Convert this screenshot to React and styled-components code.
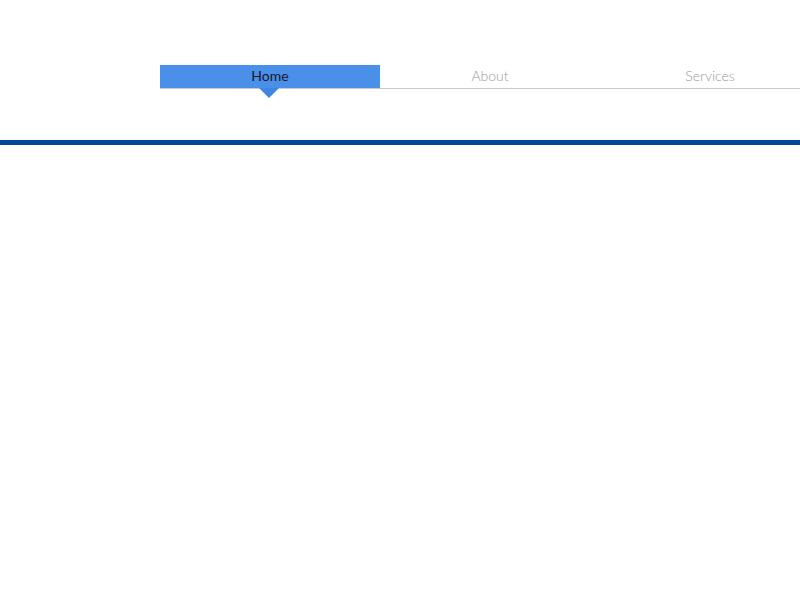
import React from "react";
import styled, { createGlobalStyle } from "styled-components";

const GlobalStyle = createGlobalStyle`
  html, body {
    margin: 0;
    padding: 0;
    background: #fff;
    font-family: "Lato", "Open Sans", sans-serif;
  }
`;

const Page = styled.div`
  width: 1830px;
  height: 3450px;
`;

const Header = styled.header`
  padding-top: 65px;
  height: 75px;
  border-bottom: 5px solid #00479a;
`;

const Tabs = styled.ul`
  display: flex;
  margin: 0 0 0 160px;
  padding: 0;
  list-style: none;
  border-bottom: 1px solid #c8c8c8;
`;

const Tab = styled.li`
  position: relative;
  width: 220px;
  height: 23px;
  line-height: 22px;
  text-align: center;
  font-size: 14px;
  font-weight: ${(p) => (p.$active ? 400 : 300)};
  color: ${(p) => (p.$active ? "#15152a" : "#9a9a9a")};
  background: ${(p) => (p.$active ? "#4a90e8" : "transparent")};

  ${(p) =>
    p.$active &&
    `
    &::after {
      content: "";
      position: absolute;
      left: 50%;
      top: 23px;
      margin-left: -11px;
      border-left: 10px solid transparent;
      border-right: 10px solid transparent;
      border-top: 10px solid #3f86e0;
    }
  `}
`;

const items = ["Home", "About", "Services"];

export default function App() {
  return (
    <Page>
      <GlobalStyle />
      <Header>
        <Tabs>
          {items.map((item, i) => (
            <Tab key={item} $active={i === 0}>
              {item}
            </Tab>
          ))}
        </Tabs>
      </Header>
    </Page>
  );
}
